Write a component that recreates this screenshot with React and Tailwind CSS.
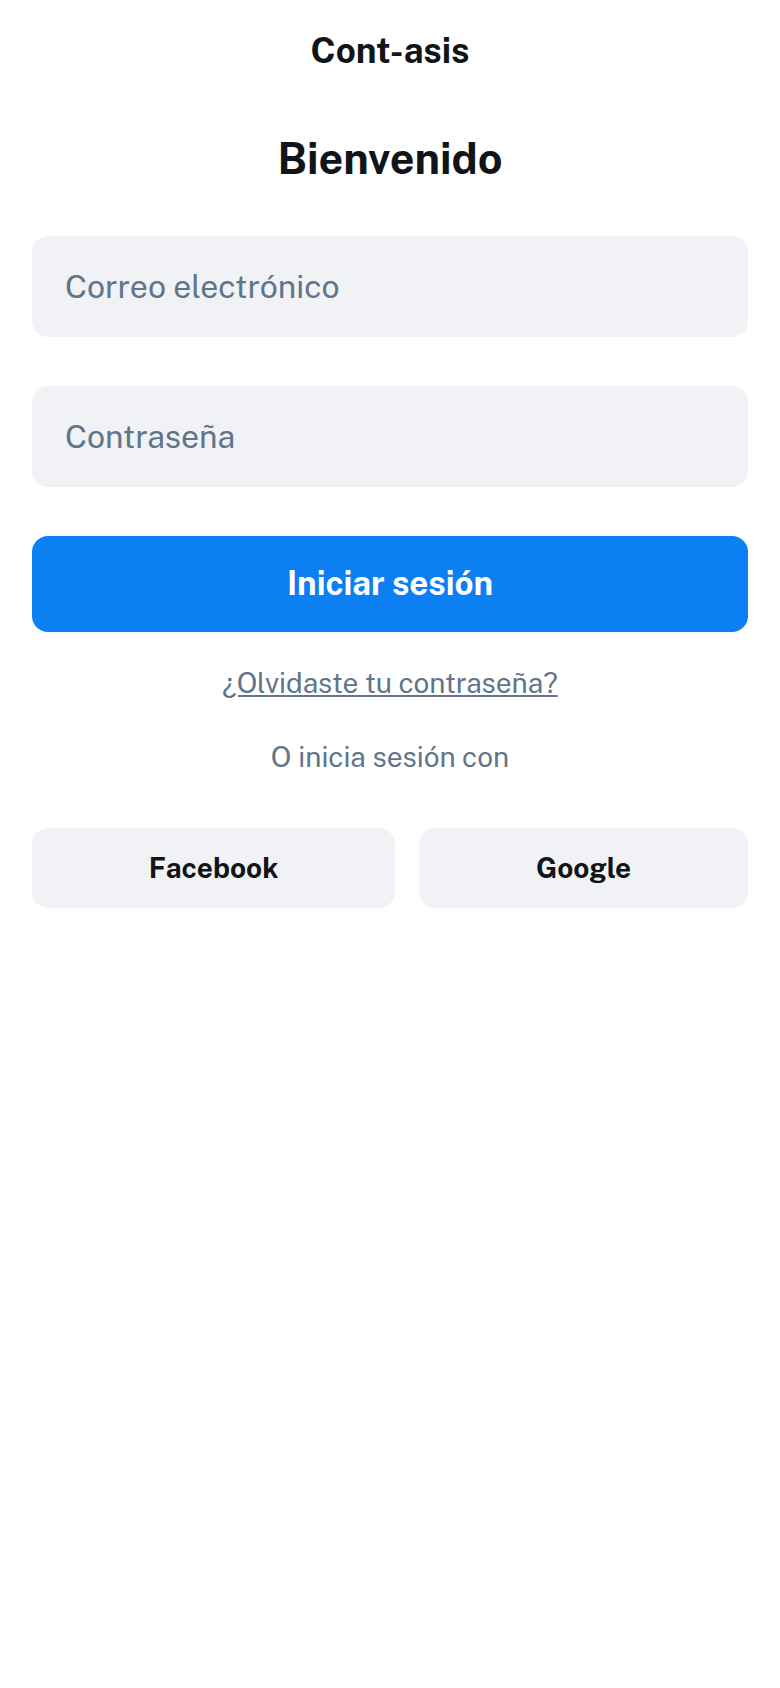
export default function App() {
  const font = { fontFamily: '"Public Sans", Roboto, "Noto Sans", sans-serif' };
  return (
    <div className="min-h-[1688px] w-full bg-white flex flex-col" style={font}>
      <div className="flex justify-center pt-[28px]">
        <h2 className="text-[35px] leading-[45px] font-bold text-[#111418]">Cont-asis</h2>
      </div>

      <h1 className="mt-[58px] text-center text-[43px] leading-[55px] font-bold text-[#111418]">Bienvenido</h1>

      <div className="mt-[50px] px-8 flex flex-col gap-[49px]">
        <input
          type="email"
          placeholder="Correo electrónico"
          className="w-full h-[101px] rounded-2xl bg-[#f0f2f5] px-[33px] text-[32px] text-[#111418] placeholder:text-[#60758a] outline-none"
        />
        <input
          type="password"
          placeholder="Contraseña"
          className="w-full h-[101px] rounded-2xl bg-[#f0f2f5] px-[33px] text-[32px] text-[#111418] placeholder:text-[#60758a] outline-none"
        />
        <button className="w-full h-[96px] rounded-2xl bg-[#0c7ff2] text-white text-[33px] font-bold">
          Iniciar sesión
        </button>
      </div>

      <p className="mt-[30px] text-center text-[28px] leading-[42px] text-[#60758a] underline">
        ¿Olvidaste tu contraseña?
      </p>
      <p className="mt-[32px] text-center text-[28px] leading-[42px] text-[#60758a]">O inicia sesión con</p>

      <div className="mt-[50px] px-8 flex gap-6">
        <button className="grow h-[80px] rounded-2xl bg-[#f0f2f5] text-[28px] font-bold text-[#111418] px-4">
          Facebook
        </button>
        <button className="grow h-[80px] rounded-2xl bg-[#f0f2f5] text-[28px] font-bold text-[#111418] px-4">
          Google
        </button>
      </div>
    </div>
  );
}
